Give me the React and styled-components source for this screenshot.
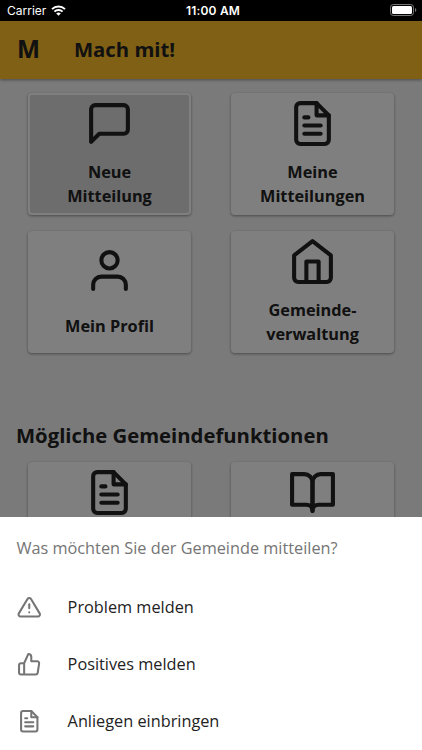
import styled, { createGlobalStyle } from "styled-components";
import {
    FiAlertTriangle,
    FiBookOpen,
    FiFileText,
    FiHome,
    FiMessageSquare,
    FiThumbsUp,
    FiUser,
} from "react-icons/fi";

const GlobalStyle = createGlobalStyle`
    * {
        box-sizing: border-box;
    }

    body {
        margin: 0;
        background: #fff;
        font-family: "Open Sans", sans-serif;
        color: #222;
    }
`;

const Screen = styled.div`
    position: relative;
    display: flex;
    flex-direction: column;
    width: 422px;
    height: 750px;
    overflow: hidden;
    background: #f5f5f5;
`;

const StatusBar = styled.div`
    position: relative;
    z-index: 3;
    flex: none;
    display: grid;
    grid-template-columns: 1fr auto 1fr;
    align-items: center;
    height: 21px;
    padding: 0 5px 0 7px;
    background: #000;
    color: #fff;
    font-family: Inter, sans-serif;
    font-size: 12px;
    letter-spacing: 0;
`;

const Carrier = styled.div`
    display: flex;
    align-items: center;
    gap: 5px;
`;

const Clock = styled.div`
    padding-left: 2px;
    font-weight: 600;
    letter-spacing: 0.2px;
`;

const Battery = styled.svg`
    justify-self: end;
    margin-bottom: 1px;
`;

const AppBar = styled.header`
    flex: none;
    display: flex;
    align-items: center;
    height: 58px;
    padding-left: 17px;
    background: #ffc02a;
    box-shadow: 0 1px 3px rgba(0, 0, 0, 0.4);
    font-weight: 700;
`;

const Logo = styled.div`
    width: 57px;
    padding-bottom: 3px;
    font-size: 24.4px;
`;

const Title = styled.h1`
    margin: 0;
    padding-bottom: 2px;
    font-size: 20.3px;
`;

const Grid = styled.div`
    display: grid;
    grid-template-columns: 163px 163px;
    grid-auto-rows: 122px;
    column-gap: 40px;
    row-gap: 16px;
    padding: 14px 0 0 28px;
`;

const Card = styled.div`
    display: flex;
    flex-direction: column;
    align-items: center;
    justify-content: space-evenly;
    border: 2px solid #fff;
    border-radius: 4px;
    background: ${(props) => (props.$pressed ? "#dadada" : "#fff")};
    box-shadow: 0 1px 3px rgba(0, 0, 0, 0.4);

    svg {
        flex: none;
        width: 49px;
        height: 49px;
        margin-bottom: 7px;
    }
`;

const CardLabel = styled.div`
    min-height: 24.4px;
    font-size: 16.3px;
    font-weight: 700;
    line-height: 24.4px;
    text-align: center;
    white-space: pre-line;
`;

const SectionTitle = styled.h2`
    margin: 68px 0 -1px 16px;
    font-size: 20.3px;
    line-height: 28px;
`;

const Backdrop = styled.div`
    position: absolute;
    inset: 21px 0 0;
    z-index: 1;
    background: rgba(0, 0, 0, 0.5);
`;

const Sheet = styled.div`
    position: absolute;
    inset: 517.4px 0 0;
    z-index: 2;
    padding-top: 4px;
    background: #fff;
`;

const SheetTitle = styled.div`
    height: 57px;
    padding-left: 16.4px;
    color: #757575;
    font-size: 16.3px;
    line-height: 54px;
`;

const Option = styled.div`
    display: flex;
    align-items: center;
    gap: 26.5px;
    height: 57px;
    padding-left: 16.6px;
    font-size: 16.3px;

    svg {
        width: 24.5px;
        height: 24.5px;
        color: #757575;
    }
`;

const cards = [
    { icon: FiMessageSquare, label: "Neue\nMitteilung", pressed: true },
    { icon: FiFileText, label: "Meine\nMitteilungen" },
    { icon: FiUser, label: "Mein Profil" },
    { icon: FiHome, label: "Gemeinde-\nverwaltung" },
];

// labels of these two stay below the sheet
const extraCards = [
    { icon: FiFileText, label: "\u00a0\n\u00a0" },
    { icon: FiBookOpen, label: "\u00a0\n\u00a0" },
];

const options = [
    { icon: FiAlertTriangle, label: "Problem melden" },
    { icon: FiThumbsUp, label: "Positives melden" },
    { icon: FiFileText, label: "Anliegen einbringen" },
];

function CardGrid({ items }) {
    return (
        <Grid>
            {items.map(({ icon: Icon, label, pressed }, i) => (
                <Card key={i} $pressed={pressed}>
                    <Icon />
                    <CardLabel>{label}</CardLabel>
                </Card>
            ))}
        </Grid>
    );
}

export default function App() {
    return (
        <Screen>
            <GlobalStyle />
            <StatusBar>
                <Carrier>
                    Carrier
                    <svg width="15" height="11" viewBox="0 0 15 11" fill="none" stroke="#fff" strokeWidth="2">
                        <path d="M1 4.1a9.3 9.3 0 0 1 13 0M3.4 6.6a5.8 5.8 0 0 1 8.2 0" />
                        <path d="M7.5 10.8L5.2 8.5a3.3 3.3 0 0 1 4.6 0z" fill="#fff" stroke="none" />
                    </svg>
                </Carrier>
                <Clock>11:00 AM</Clock>
                <Battery width="27" height="12" viewBox="0 0 27 12">
                    <rect x="0.5" y="0.5" width="23" height="11" rx="2.8" fill="none" stroke="#777" />
                    <rect x="2" y="2" width="20" height="8" rx="1.5" fill="#fff" />
                    <path d="M25 4v4c1.8-.7 1.8-3.3 0-4z" fill="#777" />
                </Battery>
            </StatusBar>
            <AppBar>
                <Logo>M</Logo>
                <Title>Mach mit!</Title>
            </AppBar>
            <CardGrid items={cards} />
            <SectionTitle>Mögliche Gemeindefunktionen</SectionTitle>
            <CardGrid items={extraCards} />
            <Backdrop />
            <Sheet>
                <SheetTitle>Was möchten Sie der Gemeinde mitteilen?</SheetTitle>
                {options.map(({ icon: Icon, label }) => (
                    <Option key={label}>
                        <Icon />
                        {label}
                    </Option>
                ))}
            </Sheet>
        </Screen>
    );
}
